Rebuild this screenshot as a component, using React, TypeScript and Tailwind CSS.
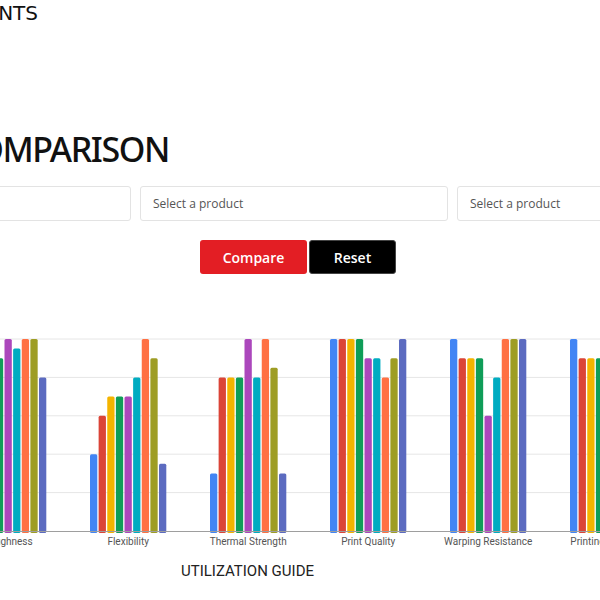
import React from 'react';

const COLORS = ['#4285F4', '#DB4437', '#F4B400', '#0F9D58', '#AB47BC', '#00ACC1', '#FF7043', '#9E9D24', '#5C6BC0'];

const groups: { label: string; values: number[] }[] = [
  { label: 'Toughness', values: [5, 4.5, 4.5, 4.5, 5, 4.75, 5, 5, 4] },
  { label: 'Flexibility', values: [2, 3, 3.5, 3.5, 3.5, 4, 5, 4.5, 1.75] },
  { label: 'Thermal Strength', values: [1.5, 4, 4, 4, 5, 4, 5, 4.25, 1.5] },
  { label: 'Print Quality', values: [5, 5, 5, 5, 4.5, 4.5, 4, 4.5, 5] },
  { label: 'Warping Resistance', values: [5, 4.5, 4.5, 4.5, 3, 4, 5, 5, 5] },
  { label: 'Printing Difficulty', values: [5, 4.5, 4.5, 4.5, 4, 4.5, 4, 4.5, 4] },
];

const TOP = 18;
const BASE = 210;
const UNIT = (BASE - TOP) / 5;

const Chart: React.FC = () => (
  <svg width="990" height="240" className="block">
    <g transform="translate(200,0)">
      {[0, 1, 2, 3, 4].map((i) => (
        <line key={i} x1={-200} x2={790} y1={TOP + i * UNIT} y2={TOP + i * UNIT} stroke="#e6e6e6" strokeWidth="1" />
      ))}
      {groups.map((g, k) => {
        const start = 8.2 + 120 * k - 38.2;
        return (
          <g key={g.label}>
            {g.values.map((v, i) => (
              <rect
                key={i}
                x={start + i * 8.625}
                y={BASE - v * UNIT}
                width={7.3}
                height={v * UNIT + 2}
                rx={1.5}
                fill={COLORS[i]}
              />
            ))}
            <text
              x={8.2 + 120 * k}
              y={224}
              textAnchor="middle"
              fontSize="10"
              fill="#555"
              fontFamily="Roboto, 'Liberation Sans', sans-serif"
            >
              {g.label}
            </text>
          </g>
        );
      })}
      <line x1={-200} x2={790} y1={BASE + 0.5} y2={BASE + 0.5} stroke="#9e9e9e" strokeWidth="1" />
    </g>
  </svg>
);

const SelectBox: React.FC = () => (
  <div className="w-[308px] h-[35px] shrink-0 border border-[#e3e3e3] rounded-[3px] bg-white flex items-center px-[12px] text-[12px] text-[#555] font-['Open_Sans',sans-serif]">
    Select a product
  </div>
);

export default function App() {
  return (
    <div className="w-[600px] h-[600px] overflow-hidden bg-white">
      <div className="w-[990px] -ml-[200px]">
        <div className="w-[238px] text-right text-[20px] leading-[26px] text-[#111] font-['DejaVu_Sans',sans-serif]">
          FILAMENTS
        </div>

        <h1 className="mt-[99px] w-[369px] text-right text-[34px] leading-[48px] tracking-[-1.4px] font-medium text-[#111] font-['Noto_Sans',sans-serif]">
          COMPARISON
        </h1>

        <div className="mt-[13px] flex gap-[9px] pl-[23px]">
          <SelectBox />
          <SelectBox />
          <SelectBox />
        </div>

        <div className="mt-[19px] flex gap-[2px] pl-[400px] font-['Open_Sans',sans-serif]">
          <button className="w-[107px] h-[34px] rounded-[3px] bg-[#e31e24] text-white text-[14px] font-semibold">
            Compare
          </button>
          <button className="w-[87px] h-[34px] rounded-[3px] bg-black border border-[#444] text-white text-[14px] font-semibold">
            Reset
          </button>
        </div>

        <div className="mt-[47px]">
          <Chart />
        </div>

        <div className="pl-[381px] text-[15px] leading-[20px] text-[#222] font-['Roboto',sans-serif]">
          UTILIZATION GUIDE
        </div>
      </div>
    </div>
  );
}
